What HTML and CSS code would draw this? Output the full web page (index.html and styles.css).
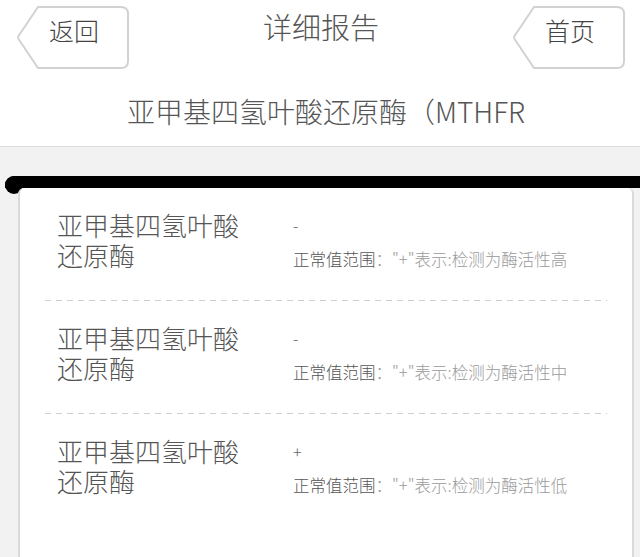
FILE: index.html
```html
<!DOCTYPE html>
<html lang="zh-CN">

<head>
  <meta charset="utf-8">
  <title>详细报告</title>
  <link rel="stylesheet" href="styles.css">
</head>

<body>
  <header class="top">
    <nav class="nav">
      <a class="tag" href="#">
        <svg class="tag-shape" width="112" height="63" viewBox="0 0 112 63">
          <path d="M21 1 H104 Q111 1 111 8 V55 Q111 62 104 62 H21 L1.5 33 Q0.5 31.5 1.5 30 Z" />
        </svg>
        <span>返回</span>
      </a>
      <h1 class="title">详细报告</h1>
      <a class="tag" href="#">
        <svg class="tag-shape" width="112" height="63" viewBox="0 0 112 63">
          <path d="M21 1 H104 Q111 1 111 8 V55 Q111 62 104 62 H21 L1.5 33 Q0.5 31.5 1.5 30 Z" />
        </svg>
        <span>首页</span>
      </a>
    </nav>
    <div class="subtitle">亚甲基四氢叶酸还原酶（MTHFR</div>
  </header>

  <main class="tray">
    <div class="slot"></div>
    <section class="card">
      <div class="row">
        <div class="label">亚甲基四氢叶酸还原酶</div>
        <div class="result">
          <div class="value">-</div>
          <div class="note"><b>正常值范围</b>："+"表示:检测为酶活性高</div>
        </div>
      </div>
      <div class="row">
        <div class="label">亚甲基四氢叶酸还原酶</div>
        <div class="result">
          <div class="value">-</div>
          <div class="note"><b>正常值范围</b>："+"表示:检测为酶活性中</div>
        </div>
      </div>
      <div class="row">
        <div class="label">亚甲基四氢叶酸还原酶</div>
        <div class="result">
          <div class="value">+</div>
          <div class="note"><b>正常值范围</b>："+"表示:检测为酶活性低</div>
        </div>
      </div>
    </section>
  </main>
</body>

</html>
```

FILE: styles.css
```css
html,
body {
  margin: 0;
  height: 100%;
  overflow: hidden;
}

body {
  background: #f2f2f2;
  color: #555;
  font-family: "Noto Sans CJK SC", "Noto Sans", sans-serif;
  font-weight: 300;
}

/* header */

.top {
  background: #fff;
  border-bottom: 1px solid #dcdcdc;
  height: 147px;
  box-sizing: border-box;
}

.nav {
  display: flex;
  justify-content: space-between;
  align-items: flex-start;
  padding: 6px 15px 0 17px;
  height: 69px;
  box-sizing: border-box;
}

.tag {
  position: relative;
  width: 112px;
  height: 63px;
  box-sizing: border-box;
  padding: 9px 0 0 32px;
  font-size: 25px;
  line-height: 30px;
  color: #444;
  text-decoration: none;
}

.tag-shape {
  position: absolute;
  left: 0;
  top: 0;
}

.tag-shape path {
  fill: #fff;
  stroke: #d2d2d2;
  stroke-width: 2;
  stroke-linejoin: round;
}

.tag span {
  position: relative;
}

.title {
  margin: 0;
  font-size: 29px;
  font-weight: 300;
  line-height: 40px;
  color: #555;
}

.subtitle {
  padding: 22px 0 0 12px;
  text-align: center;
  font-size: 28px;
  line-height: 40px;
  color: #555;
}

/* report area */

.tray {
  padding-top: 29px;
}

.slot {
  position: relative;
  height: 12px;
  margin-left: 5px;
  background: #000;
  border-radius: 9px 0 0 0;
}

.slot::before {
  content: "";
  position: absolute;
  left: 0;
  top: 0;
  width: 18px;
  height: 18px;
  border-radius: 50%;
  background: #000;
}

.card {
  position: relative;
  width: 616px;
  min-height: 370px;
  margin-left: 18px;
  box-sizing: border-box;
  background: #fff;
  border-left: 2px solid #dadada;
  border-right: 2px solid #dadada;
  border-radius: 6px 6px 0 0;
}

.row {
  display: flex;
  gap: 46px;
  margin: 0 25px;
  padding: 22px 0 30px 12px;
  background: linear-gradient(to right, #cfcfcf 6px, transparent 6px) left bottom / 11px 1px repeat-x;
}

.row:last-child {
  background: none;
}

.label {
  flex: 0 0 190px;
  font-size: 26px;
  line-height: 30px;
  color: #555;
}

.value {
  font-size: 16px;
  line-height: 30px;
  color: #666;
}

.note {
  margin-top: 7px;
  font-size: 16.5px;
  line-height: 24px;
  color: #9a9a9a;
}

.note b {
  font-weight: 300;
  color: #555;
}
```
